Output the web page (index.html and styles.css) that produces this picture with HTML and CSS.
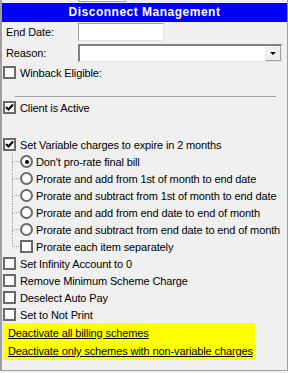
FILE: index.html
```html
<!DOCTYPE html>
<html lang="en">
<head>
<meta charset="UTF-8">
<title>Disconnect Management</title>
<link rel="stylesheet" href="styles.css">
</head>
<body>

<div class="panel">
    <div class="top-strip"><div class="cut-box"></div></div>

    <div class="title-bar">Disconnect Management</div>

    <div class="field-row">
        <label class="field-label">End Date:</label>
        <div class="text-box date-box"></div>
    </div>
    <div class="field-row">
        <label class="field-label">Reason:</label>
        <div class="text-box combo-box">
            <span class="combo-btn"><span class="arrow"></span></span>
        </div>
    </div>

    <div class="check-row winback">
        <span class="check"></span>
        <span>Winback Eligible:</span>
    </div>

    <div class="separator"></div>

    <div class="check-row">
        <span class="check on"><svg viewBox="0 0 9 9" width="9" height="9"><polyline points="1,4 3.5,6.5 8,1.5" fill="none" stroke="#000" stroke-width="2"/></svg></span>
        <span>Client is Active</span>
    </div>

    <div class="check-row variable">
        <span class="check on"><svg viewBox="0 0 9 9" width="9" height="9"><polyline points="1,4 3.5,6.5 8,1.5" fill="none" stroke="#000" stroke-width="2"/></svg></span>
        <span>Set Variable charges to expire in 2 months</span>
    </div>

    <div class="tree">
        <div class="tree-item">
            <span class="conn"><span class="conn-top"></span><span class="conn-bottom"></span></span>
            <span class="radio on"></span>
            <span>Don't pro-rate final bill</span>
        </div>
        <div class="tree-item">
            <span class="conn"><span class="conn-top"></span><span class="conn-bottom"></span></span>
            <span class="radio"></span>
            <span>Prorate and add from 1st of month to end date</span>
        </div>
        <div class="tree-item">
            <span class="conn"><span class="conn-top"></span><span class="conn-bottom"></span></span>
            <span class="radio"></span>
            <span>Prorate and subtract from 1st of month to end date</span>
        </div>
        <div class="tree-item">
            <span class="conn"><span class="conn-top"></span><span class="conn-bottom"></span></span>
            <span class="radio"></span>
            <span>Prorate and add from end date to end of month</span>
        </div>
        <div class="tree-item">
            <span class="conn"><span class="conn-top"></span><span class="conn-bottom"></span></span>
            <span class="radio"></span>
            <span>Prorate and subtract from end date to end of month</span>
        </div>
        <div class="tree-item last">
            <span class="conn"><span class="conn-top"></span><span class="conn-bottom"></span></span>
            <span class="check"></span>
            <span>Prorate each item separately</span>
        </div>
    </div>

    <div class="check-row">
        <span class="check"></span>
        <span>Set Infinity Account to 0</span>
    </div>
    <div class="check-row">
        <span class="check"></span>
        <span>Remove Minimum Scheme Charge</span>
    </div>
    <div class="check-row">
        <span class="check"></span>
        <span>Deselect Auto Pay</span>
    </div>
    <div class="check-row">
        <span class="check"></span>
        <span>Set to Not Print</span>
    </div>

    <div class="link-box">
        <a href="#" class="link">Deactivate all billing schemes</a>
        <a href="#" class="link">Deactivate only schemes with non-variable charges</a>
    </div>
</div>

</body>
</html>
```

FILE: styles.css
```css
body {
    margin: 0;
    padding: 0;
    background-color: #f0f0f0;
    font-family: 'Liberation Sans', Arial, sans-serif;
    font-size: 11px;
    letter-spacing: -0.12px;
    color: #000;
    white-space: nowrap;
}
.panel {
    width: 285px;
    height: 370px;
    border-left: 2px solid #a0a0a0;
    border-right: 1px solid #a0a0a0;
    border-bottom: 1px solid #a0a0a0;
}
.top-strip {
    height: 3px;
}
.cut-box {
    margin-left: 76px;
    width: 46px;
    height: 1px;
    background-color: #fff;
    border: 1px solid #a0a0a0;
    border-top: none;
}
.title-bar {
    height: 19px;
    line-height: 19px;
    background-color: #0000ff;
    color: #fff;
    font-weight: bold;
    font-size: 12px;
    letter-spacing: 0.5px;
    text-align: center;
}
.field-row {
    display: flex;
    align-items: center;
    height: 18px;
    margin-top: 1px;
    padding-left: 4px;
}
.field-row + .field-row {
    margin-top: 3px;
}
.field-label {
    width: 72px;
}
.text-box {
    height: 18px;
    box-sizing: border-box;
    background-color: #fff;
    border: 1px solid;
    border-color: #a0a0a0 #e3e3e3 #e3e3e3 #a0a0a0;
}
.date-box {
    width: 86px;
}
.combo-box {
    width: 204px;
    border-width: 2px 1px 1px 2px;
    border-color: #808080 #e3e3e3 #e3e3e3 #808080;
    display: flex;
    justify-content: flex-end;
}
.combo-btn {
    width: 16px;
    height: 15px;
    box-sizing: border-box;
    background-color: #f0f0f0;
    border: 1px solid;
    border-color: #f0f0f0 #a0a0a0 #a0a0a0 #f0f0f0;
    display: flex;
    align-items: center;
    justify-content: center;
}
.arrow {
    width: 0;
    height: 0;
    border-left: 3px solid transparent;
    border-right: 3px solid transparent;
    border-top: 3px solid #000;
}
.check-row {
    display: flex;
    align-items: center;
    height: 17px;
    padding-left: 1px;
}
.check-row .check {
    margin-right: 4px;
}
.winback {
    margin-top: 2px;
}
.separator {
    height: 1px;
    background-color: #a0a0a0;
    margin: 15px 11px 2px 13px;
}
.variable {
    margin-top: 20px;
}
.check {
    width: 13px;
    height: 13px;
    box-sizing: border-box;
    border: 2px solid #696969;
    background-color: #fff;
    display: inline-flex;
    align-items: center;
    justify-content: center;
    flex-shrink: 0;
}
.radio {
    width: 13px;
    height: 13px;
    box-sizing: border-box;
    border: 2px solid #696969;
    border-radius: 50%;
    background-color: #fff;
    display: inline-flex;
    align-items: center;
    justify-content: center;
    flex-shrink: 0;
    margin-right: 3px;
}
.radio.on::after {
    content: "";
    width: 4px;
    height: 4px;
    border-radius: 50%;
    background-color: #000;
}
.tree {
    padding-left: 10px;
}
.tree-item {
    display: flex;
    align-items: center;
    height: 17px;
}
.tree-item .check {
    margin-right: 3px;
}
.conn {
    display: flex;
    flex-direction: column;
    width: 7px;
    height: 100%;
    margin-right: 1px;
}
.conn-top {
    height: 8px;
    border-left: 1px dotted #a0a0a0;
    border-bottom: 1px dotted #a0a0a0;
}
.conn-bottom {
    flex: 1;
    border-left: 1px dotted #a0a0a0;
}
.tree-item.last .conn-bottom {
    border-left: none;
}
.link-box {
    width: 252px;
    margin-left: 1px;
    padding: 3px 0 2px 5px;
    box-sizing: border-box;
    background-color: #ffff00;
    display: flex;
    flex-direction: column;
    gap: 4px;
}
.link {
    color: #000;
    line-height: 14px;
    text-decoration: underline;
}
```
